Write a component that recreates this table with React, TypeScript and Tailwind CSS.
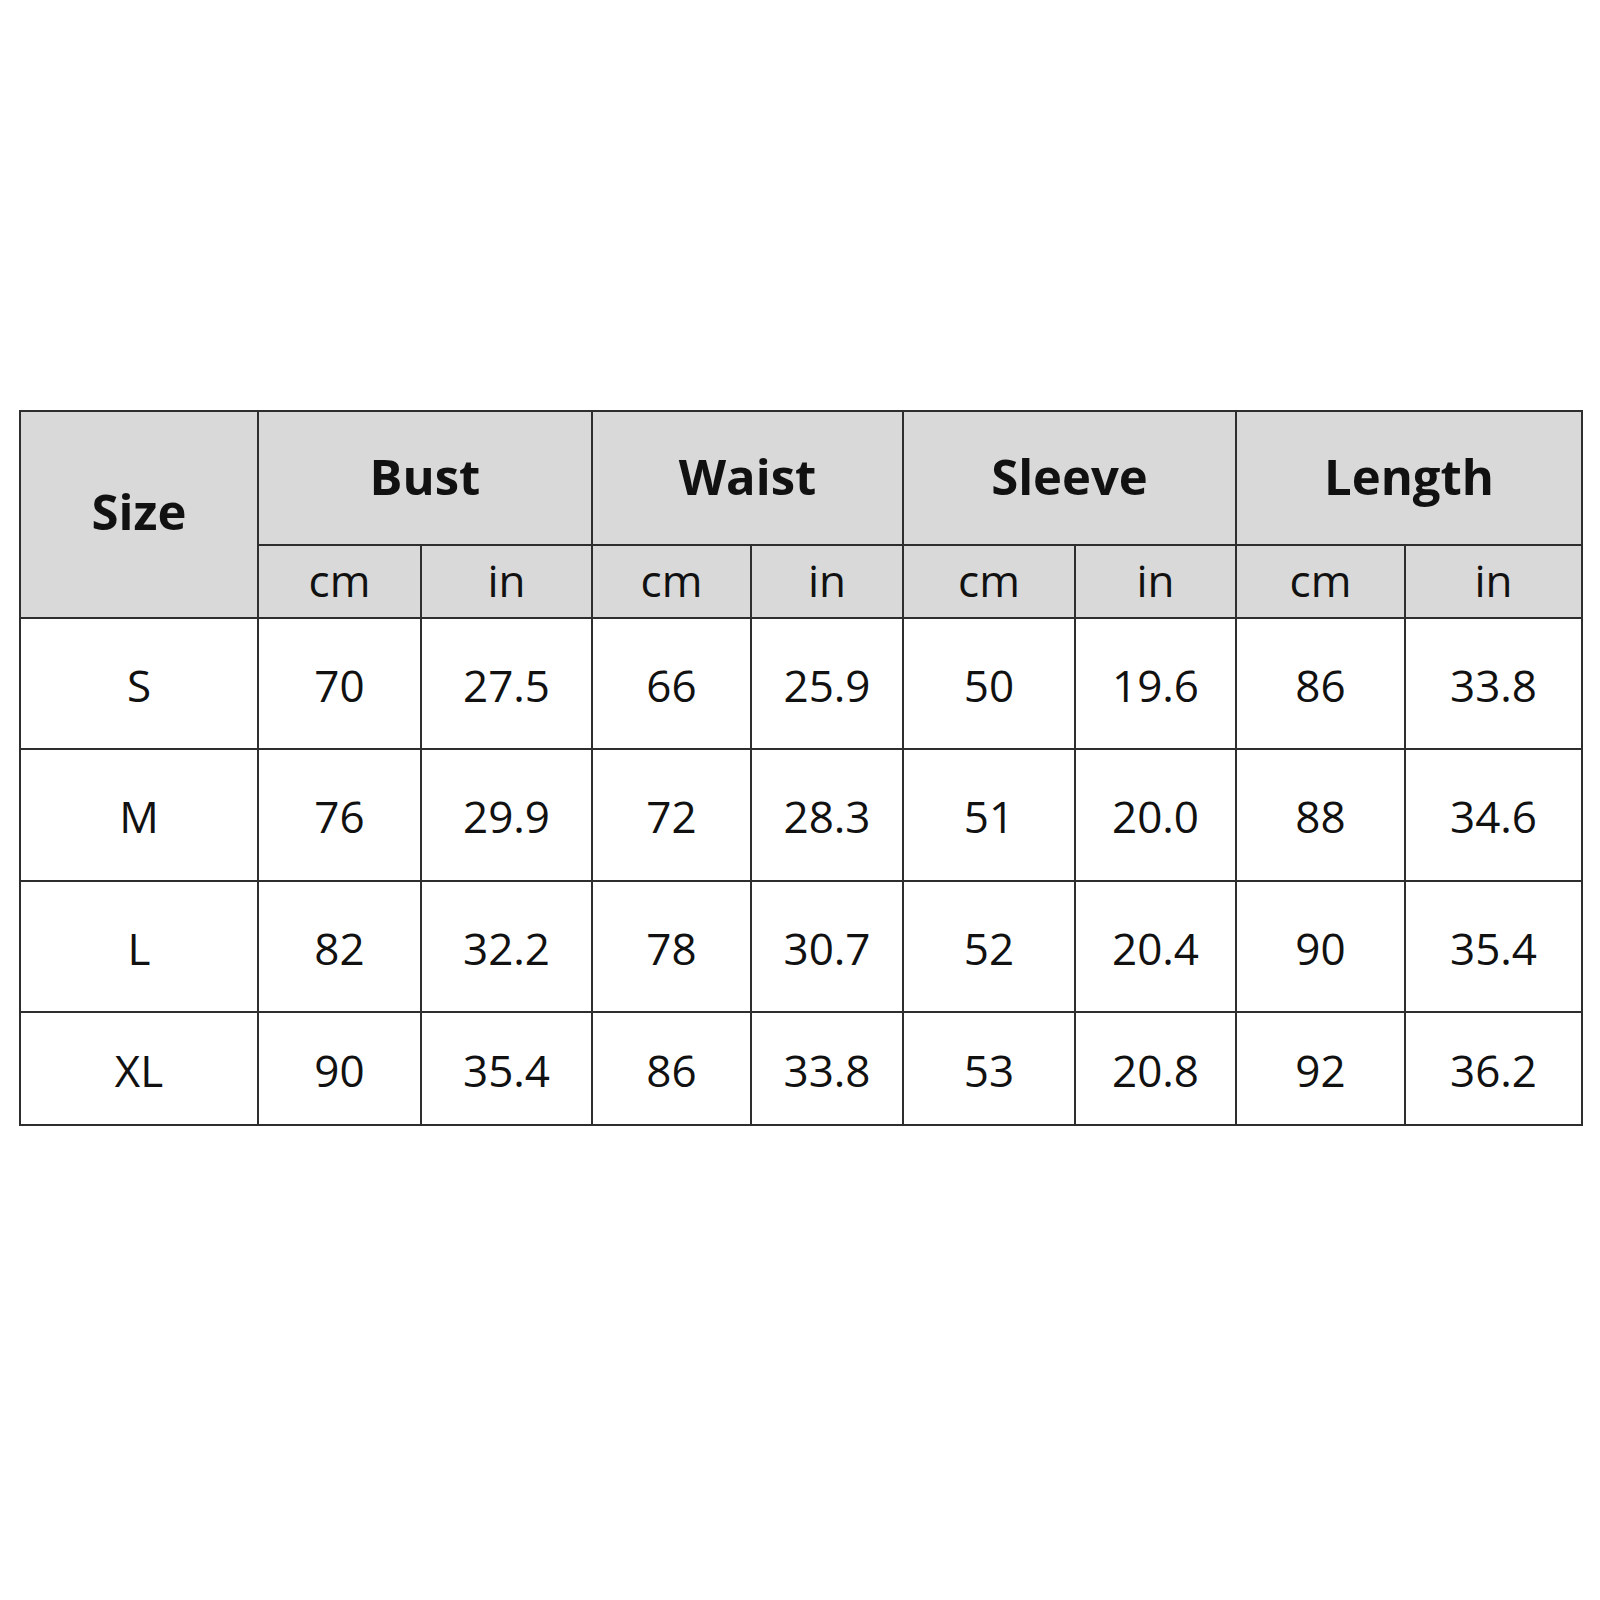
import React from "react";

const groups = ["Bust", "Waist", "Sleeve", "Length"];
const rows: [string, string[]][] = [
  ["S", ["70", "27.5", "66", "25.9", "50", "19.6", "86", "33.8"]],
  ["M", ["76", "29.9", "72", "28.3", "51", "20.0", "88", "34.6"]],
  ["L", ["82", "32.2", "78", "30.7", "52", "20.4", "90", "35.4"]],
  ["XL", ["90", "35.4", "86", "33.8", "53", "20.8", "92", "36.2"]],
];

export default function App() {
  return (
    <div
      className="w-[1600px] h-[1600px] bg-white pt-[410px] pl-[19px]"
      style={{ fontFamily: '"Open Sans", "Noto Sans", sans-serif' }}
    >
      <div className="inline-grid grid-cols-[236px_161px_169px_157px_150px_170px_159px_167px_175px] grid-rows-[132px_71px_129px_130px_129px_111px] gap-[2px] bg-[#2e2e2e] p-[2px] text-[#111]">
        <div className="row-span-2 bg-[#d9d9d9] flex items-center justify-center text-[49px] font-bold pb-[6px]">
          Size
        </div>
        {groups.map((g) => (
          <div
            key={g}
            className="col-span-2 bg-[#d9d9d9] flex items-center justify-center text-[49px] font-bold pb-[2px]"
          >
            {g}
          </div>
        ))}
        {groups.map((g) => (
          <React.Fragment key={g + "u"}>
            <div className="bg-[#d9d9d9] flex items-center justify-center text-[44px] pb-[4px]">cm</div>
            <div className="bg-[#d9d9d9] flex items-center justify-center text-[44px] pb-[4px]">in</div>
          </React.Fragment>
        ))}
        {rows.map(([s, vals]) => (
          <React.Fragment key={s}>
            <div className="bg-white flex items-center justify-center text-[44px] pt-[2px]">{s}</div>
            {vals.map((v, i) => (
              <div key={i} className="bg-white flex items-center justify-center text-[44px] pt-[2px]">
                {v}
              </div>
            ))}
          </React.Fragment>
        ))}
      </div>
    </div>
  );
}
